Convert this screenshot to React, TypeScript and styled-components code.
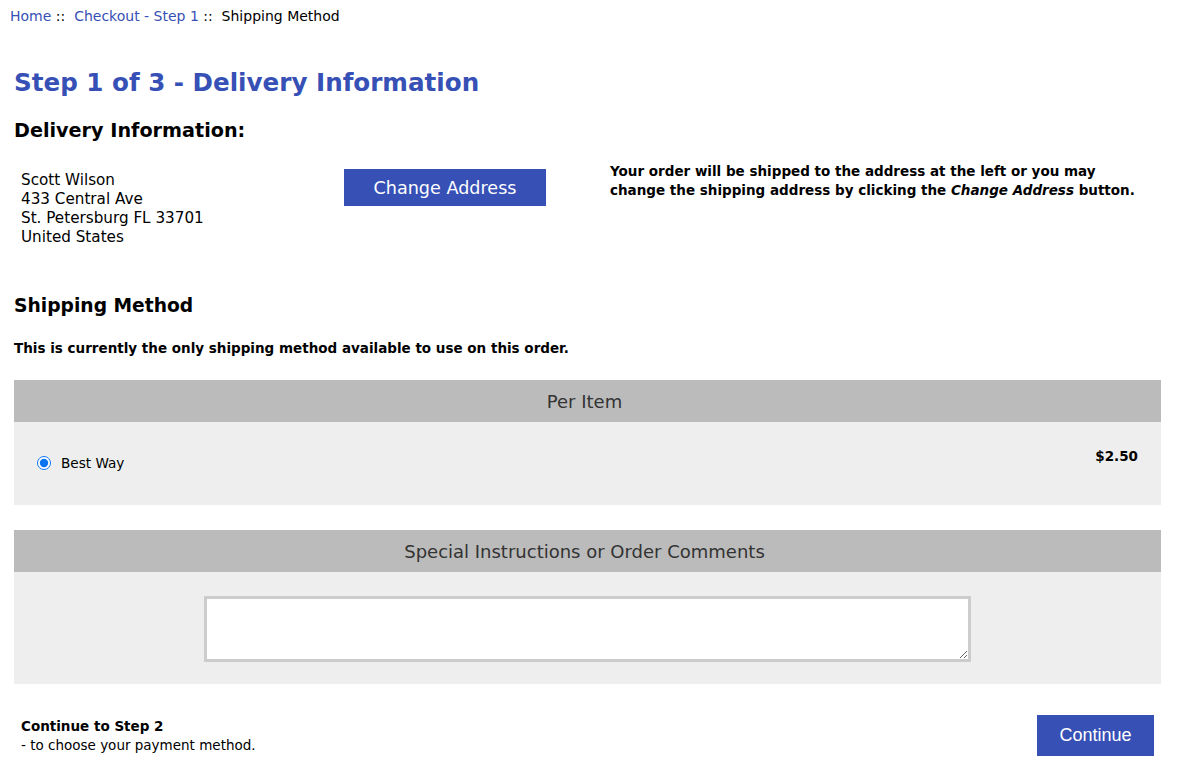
import styled, { createGlobalStyle } from "styled-components"

const GlobalStyle = createGlobalStyle`
body {
  margin: 0;
  background: #ffffff;
  font-family: "DejaVu Sans", Verdana, sans-serif;
  color: #000;
}
`

const blue = "#3650b6"

const Page = styled.div`
width: 1147px;
padding: 0 0 0 14px;
display: flex;
flex-direction: column;
`

const Breadcrumb = styled.div`
margin: 7px 0 0 -4px;
font-size: 14px;
line-height: 19px;
color: #000;
`

const Crumb = styled.a`
color: ${blue};
text-decoration: none;
`

const Title = styled.h1`
margin: 42px 0 0;
font-size: 24.6px;
line-height: 30px;
font-weight: bold;
color: ${blue};
`

const SubTitle = styled.h2`
margin: ${(p: { $top: number }) => p.$top}px 0 0;
font-size: ${(p: { $size: number }) => p.$size}px;
line-height: 22px;
font-weight: bold;
`

const DeliveryRow = styled.div`
display: grid;
grid-template-columns: 330px 266px 1fr;
margin-top: 27px;
`

const Address = styled.div`
padding: 2px 0 0 7px;
font-size: 15.2px;
line-height: 19px;
`

const ButtonCell = styled.div`
margin-top: 0;
`

const BlueButton = styled.button`
border: none;
background: ${blue};
color: #fff;
cursor: pointer;
padding: 0;
`

const ChangeButton = styled(BlueButton)`
width: 202px;
height: 37px;
font-family: "DejaVu Sans", Verdana, sans-serif;
font-size: 17.6px;
`

const Note = styled.p`
margin: -7px 0 0;
max-width: 530px;
font-size: 13.5px;
line-height: 19px;
font-weight: bold;
`

const Intro = styled.p`
margin: 22px 0 0;
font-size: 13.5px;
font-weight: bold;
line-height: 18px;
`

const Panel = styled.div`
margin-top: ${(p: { $top: number }) => p.$top}px;
display: flex;
flex-direction: column;
`

const PanelHead = styled.div`
height: 42px;
background: #bbbbbb;
color: #333;
font-size: 18px;
display: flex;
align-items: center;
justify-content: center;
padding-right: 6px;
`

const PanelBody = styled.div`
background: #eeeeee;
height: ${(p: { $h: number }) => p.$h}px;
`

const MethodRow = styled.div`
display: flex;
justify-content: space-between;
padding: 26px 23px 0 23px;
`

const Option = styled.label`
display: flex;
align-items: center;
gap: 10px;
font-size: 13.6px;
margin-top: 7px;
`

const Radio = styled.input`
margin: 0;
width: 14px;
height: 14px;
accent-color: #0a74f0;
`

const Price = styled.span`
font-size: 13.5px;
font-weight: bold;
`

const CommentBody = styled(PanelBody)`
display: flex;
justify-content: center;
padding-top: 24px;
box-sizing: border-box;
`

const Comments = styled.textarea`
width: 767px;
height: 66px;
box-sizing: border-box;
border: 3px solid #cccccc;
background: #fff;
resize: both;
font-family: inherit;
`

const Footer = styled.div`
display: flex;
justify-content: space-between;
align-items: flex-start;
margin-top: 31px;
`

const NextText = styled.div`
padding: 2px 0 0 7px;
font-size: 13.5px;
line-height: 19px;
`

const ContinueButton = styled(BlueButton)`
width: 117px;
height: 41px;
margin-right: 7px;
font-family: "Liberation Sans", Arial, sans-serif;
font-size: 18px;
`

export default function App() {
    return (
        <>
            <GlobalStyle />
            <Page>
                <Breadcrumb>
                    <Crumb href="#">Home</Crumb> ::&nbsp; <Crumb href="#">Checkout - Step 1</Crumb> ::&nbsp; Shipping Method
                </Breadcrumb>
                <Title>Step 1 of 3 - Delivery Information</Title>
                <SubTitle $top={22} $size={19.2}>Delivery Information:</SubTitle>
                <DeliveryRow>
                    <Address>
                        Scott Wilson<br />
                        433 Central Ave<br />
                        St. Petersburg FL 33701<br />
                        United States
                    </Address>
                    <ButtonCell>
                        <ChangeButton>Change Address</ChangeButton>
                    </ButtonCell>
                    <Note>
                        Your order will be shipped to the address at the left or you may
                        change the shipping address by clicking the <i>Change Address</i> button.
                    </Note>
                </DeliveryRow>
                <SubTitle $top={48} $size={18.7}>Shipping Method</SubTitle>
                <Intro>This is currently the only shipping method available to use on this order.</Intro>
                <Panel $top={23}>
                    <PanelHead>Per Item</PanelHead>
                    <PanelBody $h={83}>
                        <MethodRow>
                            <Option>
                                <Radio type="radio" name="ship" defaultChecked />
                                Best Way
                            </Option>
                            <Price>$2.50</Price>
                        </MethodRow>
                    </PanelBody>
                </Panel>
                <Panel $top={25}>
                    <PanelHead>Special Instructions or Order Comments</PanelHead>
                    <CommentBody $h={112}>
                        <Comments />
                    </CommentBody>
                </Panel>
                <Footer>
                    <NextText>
                        <b>Continue to Step 2</b><br />
                        - to choose your payment method.
                    </NextText>
                    <ContinueButton>Continue</ContinueButton>
                </Footer>
            </Page>
        </>
    )
}
